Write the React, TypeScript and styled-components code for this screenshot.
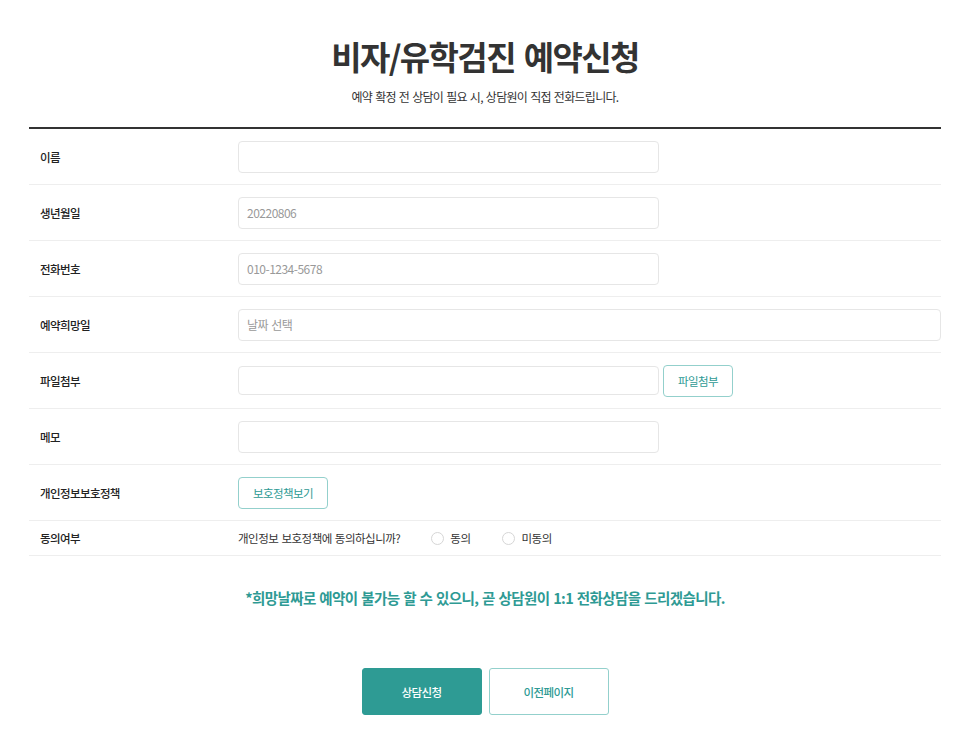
import React from 'react';
import styled, { createGlobalStyle } from 'styled-components';

const GlobalStyle = createGlobalStyle`
  * { box-sizing: border-box; }
  body {
    margin: 0;
    background: #fff;
    font-family: 'Noto Sans CJK KR', 'Noto Sans', sans-serif;
    color: #222;
  }
`;

const Page = styled.div`
  width: 912px;
  margin-left: calc(50% - 454px);
  padding-top: 32px;
  padding-bottom: 20px;
`;

const Title = styled.h1`
  margin: 0;
  text-align: center;
  font-size: 33px;
  line-height: 48px;
  font-weight: 700;
  color: #333;
  letter-spacing: -1.6px;
  word-spacing: 3px;
`;

const SubTitle = styled.p`
  margin: 7px 0 0;
  text-align: center;
  font-size: 12px;
  line-height: 20px;
  color: #333;
  letter-spacing: -0.7px;
  word-spacing: 1px;
`;

const Table = styled.div`
  margin-top: 20px;
  border-top: 2px solid #333;
`;

const Row = styled.div<{ short?: boolean }>`
  display: grid;
  grid-template-columns: 209px 1fr;
  align-items: center;
  height: ${({ short }) => (short ? '35px' : '56px')};
  border-bottom: 1px solid #eee;
`;

const Label = styled.div`
  padding-left: 11px;
  font-size: 11.5px;
  font-weight: 500;
  color: #222;
  letter-spacing: -0.6px;
`;

const Field = styled.div`
  display: flex;
  align-items: center;
  gap: 4px;
`;

const Input = styled.input<{ wide?: boolean; h?: number }>`
  width: ${({ wide }) => (wide ? '100%' : '421px')};
  height: ${({ h }) => h ?? 32}px;
  border: 1px solid #e6e6e6;
  border-radius: 4px;
  padding: 0 8px;
  font-family: inherit;
  font-size: 12px;
  letter-spacing: -0.5px;
  word-spacing: 1px;
  color: #333;
  outline: none;
  &::placeholder {
    color: #999;
  }
`;

const OutlineButton = styled.button<{ w: number }>`
  width: ${({ w }) => w}px;
  height: 32px;
  border: 1px solid #93d0cc;
  border-radius: 4px;
  background: #fff;
  color: #2e9a94;
  font-family: inherit;
  font-size: 11.5px;
  letter-spacing: -0.6px;
  cursor: pointer;
`;

const Consent = styled.div`
  display: flex;
  align-items: center;
  font-size: 11.5px;
  letter-spacing: -0.5px;
  word-spacing: 1px;
  color: #333;
`;

const Question = styled.span`
  margin-right: 31px;
`;

const RadioLabel = styled.label`
  display: flex;
  align-items: center;
  gap: 6px;
  margin-right: 32px;
  cursor: pointer;
`;

const RadioCircle = styled.span`
  width: 13px;
  height: 13px;
  border: 1px solid #d6d6d6;
  border-radius: 50%;
  background: #fff;
`;

const Notice = styled.p`
  margin: 31px 0 0;
  text-align: center;
  font-size: 14.5px;
  line-height: 22px;
  font-weight: 700;
  color: #2e9a94;
  letter-spacing: -0.6px;
  word-spacing: 1px;
`;

const Actions = styled.div`
  display: flex;
  justify-content: center;
  gap: 7px;
  margin-top: 59px;
`;

const ActionButton = styled.button<{ primary?: boolean }>`
  width: 120px;
  height: 47px;
  border-radius: 3px;
  border: 1px solid ${({ primary }) => (primary ? '#2e9b94' : '#93d0cc')};
  background: ${({ primary }) => (primary ? '#2e9b94' : '#fff')};
  color: ${({ primary }) => (primary ? '#fff' : '#2e9a94')};
  font-family: inherit;
  font-size: 11.5px;
  font-weight: 500;
  letter-spacing: -0.6px;
  cursor: pointer;
`;

const Radio = ({ text }: { text: string }) => (
  <RadioLabel>
    <RadioCircle />
    {text}
  </RadioLabel>
);

export default function App() {
  return (
    <>
      <GlobalStyle />
      <Page>
        <Title>비자/유학검진 예약신청</Title>
        <SubTitle>예약 확정 전 상담이 필요 시, 상담원이 직접 전화드립니다.</SubTitle>

        <Table>
          <Row>
            <Label>이름</Label>
            <Field>
              <Input />
            </Field>
          </Row>
          <Row>
            <Label>생년월일</Label>
            <Field>
              <Input placeholder="20220806" />
            </Field>
          </Row>
          <Row>
            <Label>전화번호</Label>
            <Field>
              <Input placeholder="010-1234-5678" />
            </Field>
          </Row>
          <Row>
            <Label>예약희망일</Label>
            <Field>
              <Input wide placeholder="날짜 선택" />
            </Field>
          </Row>
          <Row>
            <Label>파일첨부</Label>
            <Field>
              <Input h={29} />
              <OutlineButton w={70}>파일첨부</OutlineButton>
            </Field>
          </Row>
          <Row>
            <Label>메모</Label>
            <Field>
              <Input />
            </Field>
          </Row>
          <Row>
            <Label>개인정보보호정책</Label>
            <Field>
              <OutlineButton w={90}>보호정책보기</OutlineButton>
            </Field>
          </Row>
          <Row short>
            <Label>동의여부</Label>
            <Consent>
              <Question>개인정보 보호정책에 동의하십니까?</Question>
              <Radio text="동의" />
              <Radio text="미동의" />
            </Consent>
          </Row>
        </Table>

        <Notice>*희망날짜로 예약이 불가능 할 수 있으니, 곧 상담원이 1:1 전화상담을 드리겠습니다.</Notice>

        <Actions>
          <ActionButton primary>상담신청</ActionButton>
          <ActionButton>이전페이지</ActionButton>
        </Actions>
      </Page>
    </>
  );
}
